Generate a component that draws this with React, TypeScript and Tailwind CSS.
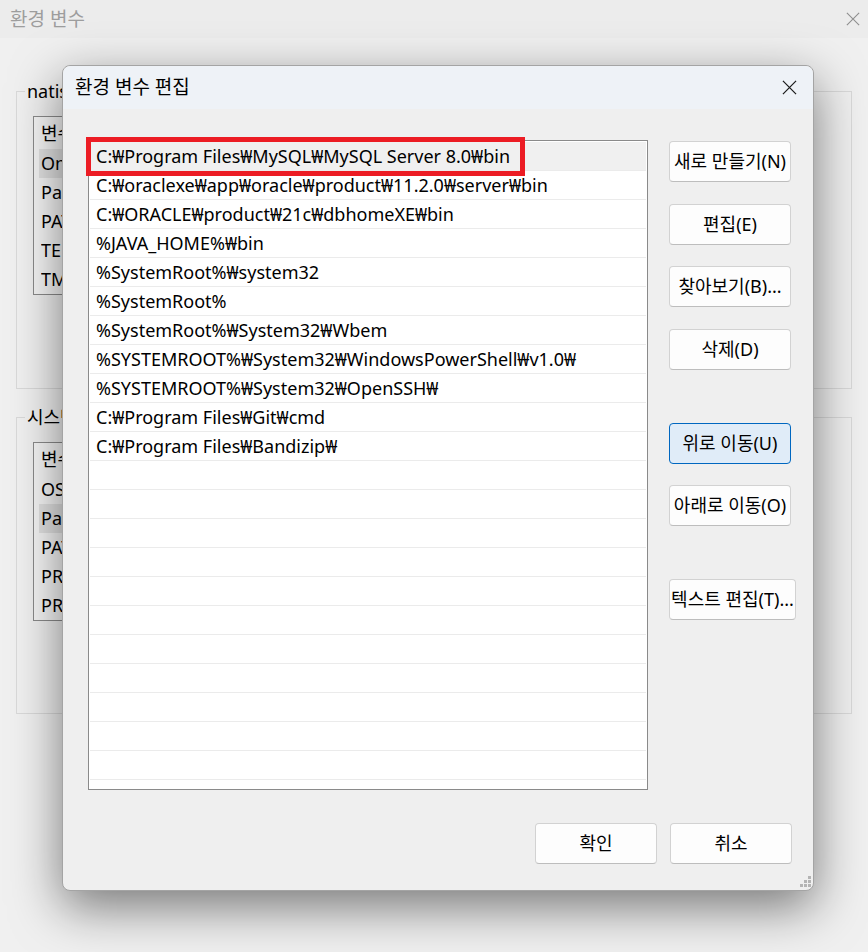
import React from 'react';

const pathRows = [
  'C:₩Program Files₩MySQL₩MySQL Server 8.0₩bin',
  'C:₩oraclexe₩app₩oracle₩product₩11.2.0₩server₩bin',
  'C:₩ORACLE₩product₩21c₩dbhomeXE₩bin',
  '%JAVA_HOME%₩bin',
  '%SystemRoot%₩system32',
  '%SystemRoot%',
  '%SystemRoot%₩System32₩Wbem',
  '%SYSTEMROOT%₩System32₩WindowsPowerShell₩v1.0₩',
  '%SYSTEMROOT%₩System32₩OpenSSH₩',
  'C:₩Program Files₩Git₩cmd',
  'C:₩Program Files₩Bandizip₩',
];

const emptyRows = 11;

const XIcon: React.FC<{ className?: string }> = ({ className }) => (
  <svg viewBox="0 0 16 16" className={className} fill="none" stroke="currentColor" strokeWidth={1.3}>
    <path d="M1 1L15 15M15 1L1 15" />
  </svg>
);

const ResizeGrip = () => (
  <svg viewBox="0 0 12 12" className="h-[12px] w-[12px]" fill="#b4b4b4">
    <rect x="8" y="0" width="3" height="3" />
    <rect x="4" y="4" width="3" height="3" />
    <rect x="8" y="4" width="3" height="3" />
    <rect x="0" y="8" width="3" height="3" />
    <rect x="4" y="8" width="3" height="3" />
    <rect x="8" y="8" width="3" height="3" />
  </svg>
);

const Btn: React.FC<{ label: string; active?: boolean; wide?: boolean; className?: string }> = ({
  label,
  active,
  wide,
  className,
}) => (
  <button
    className={
      'flex h-[41px] shrink-0 items-center justify-center whitespace-nowrap rounded-[4px] border text-[18px] text-black ' +
      (wide ? 'w-[127px] ' : 'w-[122px] ') +
      (active
        ? 'border-[#0067c0] bg-[#e0ecf8] '
        : 'border-[#d2d2d2] border-b-[#bdbdbd] bg-[#fdfdfd] ') +
      (className ?? '')
    }
  >
    {label}
  </button>
);

// only the part left of the dialog is visible, so each cell is clipped there
const Clip: React.FC<{ w: string; children: React.ReactNode }> = ({ w, children }) => (
  <span className={'block overflow-hidden whitespace-nowrap ' + w}>{children}</span>
);

const BgList: React.FC<{ rows: string[]; selected: number }> = ({ rows, selected }) => (
  <div className="w-[420px] border border-[#8b8b8b] bg-[#f6f6f6]">
    <div className="flex h-[32px] items-center pl-[7px]">
      <Clip w="w-[21px]">변수</Clip>
    </div>
    {rows.map((r, i) => (
      <div
        key={r}
        className={
          'ml-[5px] flex h-[29px] items-center pl-[2px] ' + (i === selected ? 'bg-[#e2e2e2]' : '')
        }
      >
        <Clip w="w-[21px]">{r}</Clip>
      </div>
    ))}
  </div>
);

export default function App() {
  return (
    <div className="relative h-[952px] w-[868px] overflow-hidden bg-[#f0f0f0] font-['Noto_Sans','Noto_Sans_CJK_KR',sans-serif] text-[18px] text-black">
      {/* background window */}
      <div className="flex h-[38px] items-center justify-between bg-[#ececec] pl-[10px] pr-[8px]">
        <span className="text-[19px] text-[#9d9d9d]">환경 변수</span>
        <XIcon className="h-[14px] w-[14px] text-[#8f8f8f]" />
      </div>

      <div className="pl-[16px] pr-[16px] pt-[53px]">
        <div className="h-[298px] border border-[#d9d9d9]">
          <span className="-mt-[13px] ml-[8px] block w-fit bg-[#f0f0f0] px-[2px] leading-[24px]">
            <Clip w="w-[35px]">natis에 대한 사용자 변수(U)</Clip>
          </span>
          <div className="ml-[16px] mt-[13px]">
            <BgList rows={['OneDrive', 'Path', 'PATHEXT', 'TEMP', 'TMP']} selected={0} />
          </div>
        </div>

        <div className="mt-[28px] h-[297px] border border-[#d9d9d9]">
          <span className="-mt-[13px] ml-[8px] block w-fit bg-[#f0f0f0] px-[2px] leading-[24px]">
            <Clip w="w-[35px]">시스템 변수(S)</Clip>
          </span>
          <div className="ml-[16px] mt-[13px]">
            <BgList
              rows={['OS', 'Path', 'PATHEXT', 'PROCESSOR_ARCHITECTURE', 'PROCESSOR_IDENTIFIER']}
              selected={1}
            />
          </div>
        </div>
      </div>

      {/* edit dialog */}
      <div className="absolute left-[62px] top-[65px] flex h-[826px] w-[752px] flex-col rounded-[8px] border border-[#a4a4a4] bg-[#efefef] shadow-[0_16px_50px_rgba(0,0,0,0.5)]">
        <div className="flex h-[43px] shrink-0 items-center justify-between rounded-t-[8px] bg-[#eef2f7] pl-[12px] pr-[16px]">
          <span className="text-[19px]">환경 변수 편집</span>
          <XIcon className="h-[15px] w-[15px] text-[#1a1a1a]" />
        </div>

        <div className="flex flex-1 flex-col pl-[25px] pr-[21px] pt-[31px]">
          <div className="flex">
            <div className="relative h-[650px] w-[560px] shrink-0 overflow-hidden border border-[#8a8a8a] bg-white px-[1px] pt-[1px]">
              {pathRows.map((p, i) => (
                <div
                  key={p}
                  className={
                    'flex h-[29px] items-center whitespace-nowrap border-b border-[#ebebeb] pl-[6px] ' +
                    (i === 0 ? 'bg-[#f0f0f0]' : '')
                  }
                >
                  {p}
                </div>
              ))}
              {Array.from({ length: emptyRows + 1 }).map((_, i) => (
                <div key={i} className="h-[29px] border-b border-[#ebebeb]" />
              ))}
            </div>

            <div className="ml-[21px] flex flex-col items-start">
              <Btn label="새로 만들기(N)" className="mt-[1px]" />
              <Btn label="편집(E)" className="mt-[22px]" />
              <Btn label="찾아보기(B)..." className="mt-[21px]" />
              <Btn label="삭제(D)" className="mt-[22px]" />
              <Btn label="위로 이동(U)" active className="mt-[53px]" />
              <Btn label="아래로 이동(O)" className="mt-[21px]" />
              <Btn label="텍스트 편집(T)..." wide className="mt-[53px]" />
            </div>
          </div>

          <div className="mt-[33px] flex justify-end gap-[13px]">
            <Btn label="확인" />
            <Btn label="취소" />
          </div>
        </div>

        <div className="absolute bottom-[2px] right-[1px]">
          <ResizeGrip />
        </div>
      </div>

      {/* annotation highlight */}
      <div className="pointer-events-none absolute left-[86px] top-[137px] h-[39px] w-[439px] border-[5px] border-[#ec1c24]" />
    </div>
  );
}
